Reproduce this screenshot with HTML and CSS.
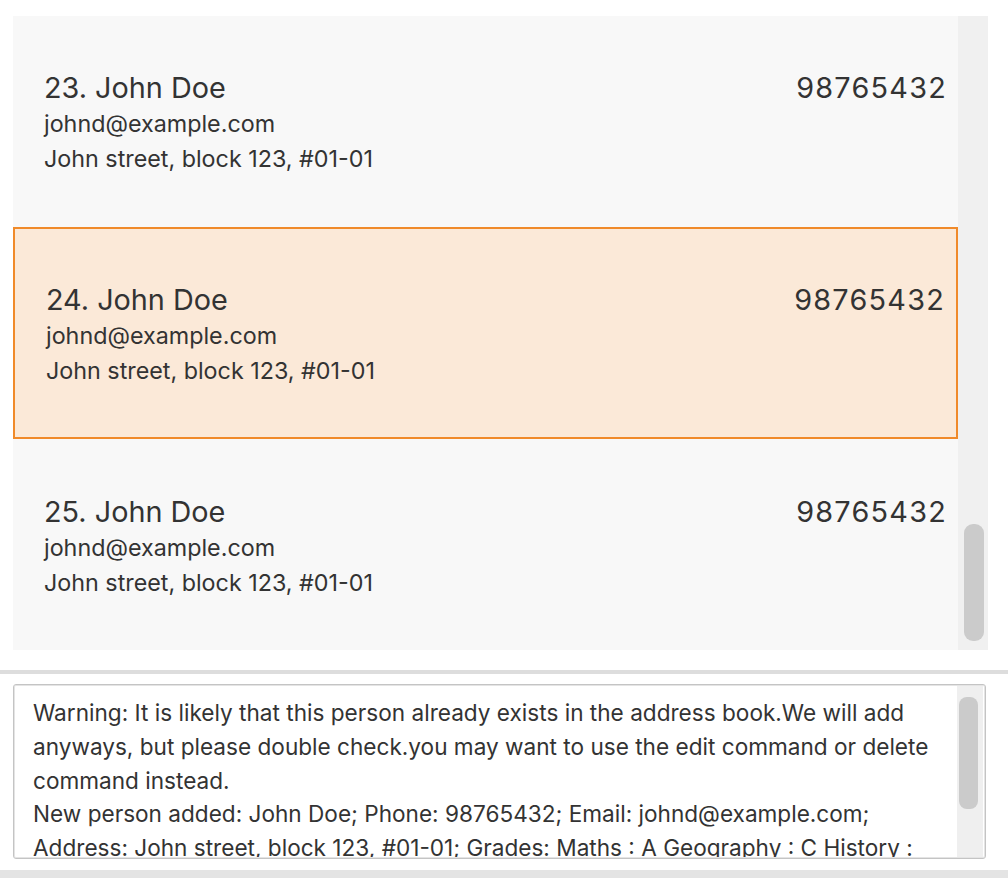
FILE: index.html
```html
<!DOCTYPE html>
<html>
<head>
<meta charset="utf-8">
<link rel="stylesheet" href="styles.css">
</head>
<body>
<div class="app">
  <div class="list-pane">
    <div class="list">
      <div class="card first">
        <div class="card-body">
          <div class="row"><span class="name">23. John Doe</span><span class="phone">98765432</span></div>
          <div class="detail email">johnd@example.com</div>
          <div class="detail">John street, block 123, #01-01</div>
        </div>
      </div>
      <div class="card selected">
        <div class="card-body">
          <div class="row"><span class="name">24. John Doe</span><span class="phone">98765432</span></div>
          <div class="detail email">johnd@example.com</div>
          <div class="detail">John street, block 123, #01-01</div>
        </div>
      </div>
      <div class="card">
        <div class="card-body">
          <div class="row"><span class="name">25. John Doe</span><span class="phone">98765432</span></div>
          <div class="detail email">johnd@example.com</div>
          <div class="detail">John street, block 123, #01-01</div>
        </div>
      </div>
    </div>
    <div class="vscroll"><div class="thumb list-thumb"></div></div>
  </div>
  <div class="gap"></div>
  <div class="divider"></div>
  <div class="result-pane">
    <div class="result-box">
      <div class="result-text">Warning: It is likely that this person already exists in the address book.We will add<br>anyways, but please double check.you may want to use the edit command or delete<br>command instead.<br>New person added: John Doe; Phone: 98765432; Email: johnd@example.com;<br>Address: John street, block 123, #01-01; Grades: Maths : A Geography : C History :</div>
      <div class="rscroll"><div class="thumb result-thumb"></div></div>
    </div>
  </div>
  <div class="bottom-strip"></div>
</div>
</body>
</html>
```
FILE: styles.css
```css
html, body {
  margin: 0;
  padding: 0;
  background: #ffffff;
}
body {
  font-family: Inter, "Noto Sans", sans-serif;
  color: #333333;
  width: 1008px;
  height: 878px;
  overflow: hidden;
}
.app {
  display: flex;
  flex-direction: column;
}
.list-pane {
  display: flex;
  padding: 16px 20px 0 13px;
  height: 634px;
}
.list {
  width: 945px;
  height: 634px;
  overflow: hidden;
  background: #f8f8f8;
  display: flex;
  flex-direction: column;
}
.card {
  box-sizing: border-box;
  height: 212px;
  flex: 0 0 212px;
  padding: 0 12px 0 31px;
}
.card.first {
  margin-top: -1px;
}
.card.selected {
  background: #fbe9d8;
  border: 2px solid #f08a2a;
}
.card-body {
  padding-top: 54px;
}
.card.selected .card-body {
  padding-top: 52px;
}
.row {
  display: flex;
  justify-content: space-between;
  align-items: baseline;
  height: 37px;
  line-height: 37px;
}
.name, .phone {
  font-size: 28.8px;
  white-space: nowrap;
}
.phone {
  letter-spacing: 1.25px;
  margin-right: -1px;
}
.detail {
  font-size: 23.3px;
  line-height: 34.5px;
  white-space: nowrap;
}
.email {
  margin-top: 1px;
}
.vscroll {
  width: 30px;
  height: 634px;
  background: #f0f0f0;
  box-sizing: border-box;
  padding: 508px 4px 0 6px;
}
.thumb {
  background: #cbcbcb;
  border-radius: 9px;
}
.list-thumb {
  height: 117px;
}
.gap {
  height: 20px;
}
.divider {
  height: 4px;
  background: #dddddd;
}
.result-pane {
  padding: 10px 22px 11px 13px;
}
.result-box {
  box-sizing: border-box;
  height: 175px;
  border: 1px solid #c4c4c4;
  border-radius: 3px;
  box-shadow: inset 0 0 0 1px #e4e4e4;
  display: flex;
  overflow: hidden;
  padding: 1px 2px 1px 1px;
}
.result-text {
  flex: 1;
  padding: 10px 0 0 18px;
  font-size: 22.6px;
  line-height: 33.75px;
  white-space: nowrap;
  overflow: hidden;
}
.rscroll {
  width: 26px;
  background: #efefef;
  box-sizing: border-box;
  padding: 11px 5px 0 2px;
}
.result-thumb {
  height: 112px;
  border-radius: 8px;
}
.bottom-strip {
  height: 8px;
  background: #e4e4e4;
}
```
